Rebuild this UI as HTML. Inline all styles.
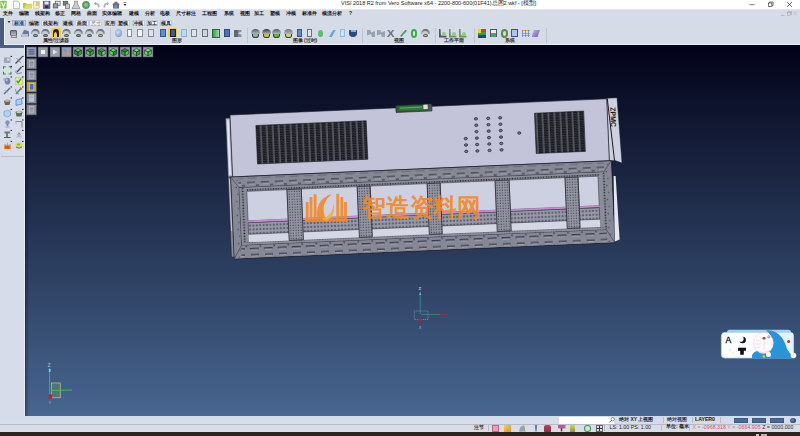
<!DOCTYPE html>
<html><head><meta charset="utf-8">
<style>
*{margin:0;padding:0;box-sizing:border-box}
html,body{width:800px;height:436px;overflow:hidden}
body{position:relative;background:#d6dbe8;font-family:"Liberation Sans",sans-serif;color:#222}
.a{position:absolute}
.t{position:absolute;white-space:nowrap;line-height:1;font-weight:bold}
svg{position:absolute}
</style></head><body>
<div class="a" style="left:25px;top:45px;width:775px;height:371px;background:linear-gradient(#020218,#48668f)"></div>
<div class="a" style="left:0px;top:0px;width:800px;height:9px;background:#fff"></div>
<div class="a" style="left:0px;top:9px;width:800px;height:1px;background:#e4e6ec"></div>
<svg class="a" style="left:0;top:0" width="130" height="10"><rect x="0.3" y="0.8" width="6.4" height="7.6" rx="0.8" fill="#86c455"/><path d="M1.6,2.2 L3.5,7 L5.4,2.2" stroke="#f4fff0" stroke-width="1.1" fill="none"/><path d="M13.4,1 h4.3 l1.8,1.8 v5.8 h-6.1 Z" fill="#f6f8fc" stroke="#8a94a8" stroke-width="0.6"/><path d="M23,3 h3 l1,1 h5 v4.5 h-9 Z" fill="#b8c838"/><path d="M24,8.5 L26,4.5 h7 l-2,4 Z" fill="#e0e060"/><rect x="33.5" y="1.3" width="6" height="7" fill="#f4ecc0" stroke="#c8b060" stroke-width="0.5"/><rect x="36" y="2.5" width="3" height="1" fill="#c0a850"/><rect x="36" y="4.5" width="3" height="1" fill="#c0a850"/><rect x="43.2" y="1.2" width="6.8" height="7.2" fill="#6a6aa0" stroke="#40406a" stroke-width="0.6"/><rect x="44.6" y="1.6" width="4" height="2.8" fill="#e8e8f4"/><rect x="45" y="5.6" width="3.4" height="2.6" fill="#30304a"/><rect x="55.5" y="1.2" width="4.6" height="4.2" fill="#e8eaee" stroke="#50545c" stroke-width="0.7"/><rect x="53.2" y="3.8" width="4.6" height="4.2" fill="#9aa0a8" stroke="#40444c" stroke-width="0.7"/><rect x="63.2" y="1.2" width="4.6" height="4" fill="#7a8088" stroke="#40444c" stroke-width="0.6"/><rect x="65.5" y="4" width="4" height="4.5" fill="#c8ccd4" stroke="#50545c" stroke-width="0.6"/><path d="M74.5,1.2 h3 v2.5 l2.5,4.8 h-8 l2.5,-4.8 Z" fill="#c8ccd0" stroke="#70767e" stroke-width="0.6"/><circle cx="86" cy="5" r="3.9" fill="#5a9a68"/><circle cx="86" cy="5" r="2" fill="#8ac090"/><path d="M99.5,7.5 Q99.8,2.5 96,3 L96,1.4 L93.8,3.6 L96,5.6 L96,4.3 Q98,4.3 97.8,7.5 Z" fill="#a8acb4"/><path d="M103.5,7.5 Q103.2,2.5 107,3 L107,1.4 L109.2,3.6 L107,5.6 L107,4.3 Q105,4.3 105.2,7.5 Z" fill="#a8acb4"/><path d="M112,4.5 L116,1.2 L120,4.5 L119,4.5 L119,8.5 L113,8.5 L113,4.5 Z" fill="#6a7080"/><rect x="114.5" y="5.5" width="2.5" height="3" fill="#6a9ad0"/><rect x="123.5" y="2.2" width="3" height="0.6" fill="#333"/><path d="M123.5,4 h3 l-1.5,2 Z" fill="#222"/></svg>
<span class="t" style="left:341px;top:1.2px;font-size:5.53px;color:#222;font-weight:normal">VISI 2018 R2 from Vero Software x64 - 2200-800-600(01F41)总图2.wkf - [模型]</span>
<svg class="a" style="left:740px;top:0" width="60" height="9"><line x1="9.5" y1="4.6" x2="14.5" y2="4.6" stroke="#222" stroke-width="0.6"/><rect x="28.3" y="3" width="3.6" height="3.6" fill="none" stroke="#222" stroke-width="0.6"/><path d="M29.5,3 v-1 h3.6 v3.6 h-1.2" fill="none" stroke="#222" stroke-width="0.6"/><path d="M47.2,2.2 L51.8,6.8 M51.8,2.2 L47.2,6.8" stroke="#222" stroke-width="0.7"/></svg>
<span class="t" style="left:3px;top:11.2px;font-size:5px;color:#111;">文件</span>
<span class="t" style="left:19px;top:11.2px;font-size:5px;color:#111;">编辑</span>
<span class="t" style="left:35px;top:11.2px;font-size:5px;color:#111;">线架构</span>
<span class="t" style="left:55px;top:11.2px;font-size:5px;color:#111;">修正</span>
<span class="t" style="left:71px;top:11.2px;font-size:5px;color:#111;">网格</span>
<span class="t" style="left:87px;top:11.2px;font-size:5px;color:#111;">曲面</span>
<span class="t" style="left:102px;top:11.2px;font-size:5px;color:#111;">实体编辑</span>
<span class="t" style="left:129px;top:11.2px;font-size:5px;color:#111;">建模</span>
<span class="t" style="left:145px;top:11.2px;font-size:5px;color:#111;">分析</span>
<span class="t" style="left:160px;top:11.2px;font-size:5px;color:#111;">电极</span>
<span class="t" style="left:176px;top:11.2px;font-size:5px;color:#111;">尺寸标注</span>
<span class="t" style="left:202px;top:11.2px;font-size:5px;color:#111;">工程图</span>
<span class="t" style="left:224px;top:11.2px;font-size:5px;color:#111;">系统</span>
<span class="t" style="left:240px;top:11.2px;font-size:5px;color:#111;">视图</span>
<span class="t" style="left:254px;top:11.2px;font-size:5px;color:#111;">加工</span>
<span class="t" style="left:270px;top:11.2px;font-size:5px;color:#111;">塑模</span>
<span class="t" style="left:286px;top:11.2px;font-size:5px;color:#111;">冲模</span>
<span class="t" style="left:302px;top:11.2px;font-size:5px;color:#111;">标准件</span>
<span class="t" style="left:322px;top:11.2px;font-size:5px;color:#111;">模流分析</span>
<span class="t" style="left:349px;top:11.2px;font-size:5px;color:#111;">?</span>
<svg class="a" style="left:776px;top:9px" width="24" height="9"><line x1="5" y1="6.3" x2="8.5" y2="6.3" stroke="#999" stroke-width="0.6"/><rect x="11.5" y="3.3" width="3" height="3" fill="none" stroke="#999" stroke-width="0.5"/><path d="M12.4,3.3 v-0.9 h3 v3 h-0.9" fill="none" stroke="#999" stroke-width="0.5"/><path d="M17.6,2.6 L20.8,5.8 M20.8,2.6 L17.6,5.8" stroke="#aaa" stroke-width="0.5"/></svg>
<div class="a" style="left:0px;top:17.5px;width:3.5px;height:28px;background:#4a5a80"></div>
<div class="a" style="left:3.5px;top:17.5px;width:796.5px;height:27px;background:#d6dbe8"></div>
<div class="a" style="left:3.5px;top:18px;width:0.7px;height:26.5px;background:#eaf0f8"></div>
<div class="a" style="left:3.5px;top:44px;width:796.5px;height:1px;background:#eaf0f8"></div>
<span class="t" style="left:7.6px;top:19.6px;font-size:4.2px;color:#111;">▾</span>
<div class="a" style="left:12.4px;top:19.6px;width:13.6px;height:6.8px;background:#c9d6ea;border:0.6px solid #9fb2d0"></div>
<span class="t" style="left:12.4px;top:20.5px;width:13.6px;text-align:center;font-size:5px;color:#26456e">标准</span>
<div class="a" style="left:27.5px;top:19.6px;width:12.5px;height:6.8px;background:#f6f7fb;border:0.6px solid #c8ccd8"></div>
<span class="t" style="left:27.5px;top:20.5px;width:12.5px;text-align:center;font-size:5px;color:#222">编辑</span>
<div class="a" style="left:41px;top:19.6px;width:18px;height:6.8px;background:#f6f7fb;border:0.6px solid #c8ccd8"></div>
<span class="t" style="left:41px;top:20.5px;width:18px;text-align:center;font-size:5px;color:#222">线架构</span>
<div class="a" style="left:61.5px;top:19.6px;width:12.7px;height:6.8px;background:#f6f7fb;border:0.6px solid #c8ccd8"></div>
<span class="t" style="left:61.5px;top:20.5px;width:12.7px;text-align:center;font-size:5px;color:#222">建模</span>
<div class="a" style="left:75px;top:19.6px;width:13.5px;height:6.8px;background:#f6f7fb;border:0.6px solid #c8ccd8"></div>
<span class="t" style="left:75px;top:20.5px;width:13.5px;text-align:center;font-size:5px;color:#222">曲面</span>
<div class="a" style="left:89px;top:19.6px;width:13px;height:6.8px;background:#f6f7fb;border:0.6px solid #c8ccd8"></div>
<span class="t" style="left:89px;top:20.5px;width:13px;text-align:center;font-size:5px;color:#999">尺寸</span>
<div class="a" style="left:103.5px;top:19.6px;width:12px;height:6.8px;background:#f6f7fb;border:0.6px solid #c8ccd8"></div>
<span class="t" style="left:103.5px;top:20.5px;width:12px;text-align:center;font-size:5px;color:#222">应用</span>
<div class="a" style="left:117px;top:19.6px;width:12.7px;height:6.8px;background:#f6f7fb;border:0.6px solid #c8ccd8"></div>
<span class="t" style="left:117px;top:20.5px;width:12.7px;text-align:center;font-size:5px;color:#222">塑模</span>
<div class="a" style="left:132px;top:19.6px;width:12.7px;height:6.8px;background:#f6f7fb;border:0.6px solid #c8ccd8"></div>
<span class="t" style="left:132px;top:20.5px;width:12.7px;text-align:center;font-size:5px;color:#222">冲模</span>
<div class="a" style="left:146px;top:19.6px;width:12px;height:6.8px;background:#f6f7fb;border:0.6px solid #c8ccd8"></div>
<span class="t" style="left:146px;top:20.5px;width:12px;text-align:center;font-size:5px;color:#222">加工</span>
<div class="a" style="left:159.7px;top:19.6px;width:12px;height:6.8px;background:#f6f7fb;border:0.6px solid #c8ccd8"></div>
<span class="t" style="left:159.7px;top:20.5px;width:12px;text-align:center;font-size:5px;color:#222">模具</span>
<span class="t" style="left:42.6px;top:38.2px;font-size:5px;color:#333;">属性/过滤器</span>
<span class="t" style="left:172px;top:38.2px;font-size:5px;color:#333;">图形</span>
<span class="t" style="left:292.5px;top:38.2px;font-size:5px;color:#333;">图像 (过时)</span>
<span class="t" style="left:394px;top:38.2px;font-size:5px;color:#333;">视图</span>
<span class="t" style="left:444px;top:38.2px;font-size:5px;color:#333;">工作平面</span>
<span class="t" style="left:505px;top:38.2px;font-size:5px;color:#333;">系统</span>
<div class="a" style="left:110px;top:28px;width:0.7px;height:15px;background:#bfc4d2"></div>
<div class="a" style="left:247px;top:28px;width:0.7px;height:15px;background:#bfc4d2"></div>
<div class="a" style="left:362px;top:28px;width:0.7px;height:15px;background:#bfc4d2"></div>
<div class="a" style="left:435px;top:28px;width:0.7px;height:15px;background:#bfc4d2"></div>
<div class="a" style="left:474px;top:28px;width:0.7px;height:15px;background:#bfc4d2"></div>
<div class="a" style="left:546px;top:28px;width:0.7px;height:15px;background:#bfc4d2"></div>
<div class="a" style="left:10px;top:29.5px;width:7px;height:6px;background:linear-gradient(#7a7e88,#b8bcc4);border-radius:1px;border:0.6px solid #5a5e68"></div>
<div class="a" style="left:11px;top:35.0px;width:5.5px;height:2.5px;background:#d8d0a0;border:0.5px solid #888"></div>
<div class="a" style="left:21px;top:29.5px;width:8px;height:7px;background:#6a7a98;clip-path:polygon(0 100%,40% 0,100% 30%,100% 100%)"></div>
<div class="a" style="left:22px;top:33.5px;width:6px;height:3px;background:#b8c0d0"></div>
<div class="a" style="left:31px;top:29.1px;width:8.5px;height:5px;background:linear-gradient(#60646e,#a4a8b2);border-radius:50% 50% 0 0/100% 100% 0 0"></div>
<div class="a" style="left:32.2px;top:30.5px;width:6.1px;height:3px;background:#c8ccd4;border-radius:50% 50% 0 0/100% 100% 0 0"></div>
<div class="a" style="left:32.5px;top:33.8px;width:5.5px;height:3.6px;background:#7ab870;border-radius:50%;border:0.5px solid #555"></div>
<div class="a" style="left:41px;top:29.1px;width:8.5px;height:5px;background:linear-gradient(#60646e,#a4a8b2);border-radius:50% 50% 0 0/100% 100% 0 0"></div>
<div class="a" style="left:42.2px;top:30.5px;width:6.1px;height:3px;background:#c8ccd4;border-radius:50% 50% 0 0/100% 100% 0 0"></div>
<div class="a" style="left:42.5px;top:33.8px;width:5.5px;height:3.6px;background:#6a90c0;border-radius:50%;border:0.5px solid #555"></div>
<div class="a" style="left:51px;top:28.0px;width:9.5px;height:10px;background:#f2d24a;border-radius:1px"></div>
<div class="a" style="left:52.5px;top:29.0px;width:6.5px;height:8px;background:#222;border-radius:50% 50% 0 0"></div>
<div class="a" style="left:54.2px;top:31.5px;width:3px;height:5.5px;background:#f2d24a;border-radius:50% 50% 0 0"></div>
<div class="a" style="left:62px;top:29.1px;width:8.5px;height:5px;background:linear-gradient(#60646e,#a4a8b2);border-radius:50% 50% 0 0/100% 100% 0 0"></div>
<div class="a" style="left:63.2px;top:30.5px;width:6.1px;height:3px;background:#c8ccd4;border-radius:50% 50% 0 0/100% 100% 0 0"></div>
<div class="a" style="left:63.5px;top:33.8px;width:5.5px;height:3.6px;background:#8ab050;border-radius:50%;border:0.5px solid #555"></div>
<div class="a" style="left:74px;top:29.1px;width:8.5px;height:5px;background:linear-gradient(#60646e,#a4a8b2);border-radius:50% 50% 0 0/100% 100% 0 0"></div>
<div class="a" style="left:75.2px;top:30.5px;width:6.1px;height:3px;background:#c8ccd4;border-radius:50% 50% 0 0/100% 100% 0 0"></div>
<div class="a" style="left:75.5px;top:33.8px;width:5.5px;height:3.6px;background:#60b060;border-radius:50%;border:0.5px solid #555"></div>
<div class="a" style="left:85px;top:29.1px;width:8.5px;height:5px;background:linear-gradient(#60646e,#a4a8b2);border-radius:50% 50% 0 0/100% 100% 0 0"></div>
<div class="a" style="left:86.2px;top:30.5px;width:6.1px;height:3px;background:#c8ccd4;border-radius:50% 50% 0 0/100% 100% 0 0"></div>
<div class="a" style="left:86.5px;top:33.8px;width:5.5px;height:3.6px;background:#70b858;border-radius:50%;border:0.5px solid #555"></div>
<div class="a" style="left:96px;top:29.1px;width:8.5px;height:5px;background:linear-gradient(#60646e,#a4a8b2);border-radius:50% 50% 0 0/100% 100% 0 0"></div>
<div class="a" style="left:97.2px;top:30.5px;width:6.1px;height:3px;background:#c8ccd4;border-radius:50% 50% 0 0/100% 100% 0 0"></div>
<div class="a" style="left:97.5px;top:33.8px;width:5.5px;height:3.6px;background:#d8d050;border-radius:50%;border:0.5px solid #555"></div>
<div class="a" style="left:114.5px;top:29.0px;width:7.5px;height:8px;background:radial-gradient(circle at 40% 40%,#cfe0f4,#5a8ac8);border-radius:50%"></div>
<div class="a" style="left:126.8px;top:29.2px;width:5.4px;height:7.6px;background:#f4f5f8;border:0.6px solid #8a8e98"></div>
<div class="a" style="left:137.3px;top:29.2px;width:5.9px;height:7.6px;background:#f4f5f8;border:0.6px solid #8a8e98"></div>
<div class="a" style="left:147.8px;top:29.2px;width:5.9px;height:7.6px;background:#dfe2e8;border:0.6px solid #8a8e98"></div>
<div class="a" style="left:159.8px;top:29.2px;width:5.9px;height:7.6px;background:#5a90d0;border:0.6px solid #305a90"></div>
<div class="a" style="left:168.3px;top:28.2px;width:8.9px;height:9.3px;background:#f0d040"></div>
<div class="a" style="left:169.8px;top:29.2px;width:5.9px;height:7.6px;background:#3a5a90;border:0.6px solid #222"></div>
<div class="a" style="left:180.8px;top:29.2px;width:5.9px;height:7.6px;background:#bcd8f0;border:0.6px solid #8ab0d8"></div>
<div class="a" style="left:191.3px;top:29.2px;width:5.4px;height:7.6px;background:#e0e2e8;border:0.6px solid #80848e"></div>
<div class="a" style="left:202.3px;top:29.2px;width:5.9px;height:7.6px;background:#d0d4dc;border:0.6px solid #6a6e78"></div>
<div class="a" style="left:212px;top:29.0px;width:8px;height:8.5px;background:linear-gradient(90deg,#3a9a50,#a8d8a0);border:0.6px solid #2a6a3a"></div>
<div class="a" style="left:224.3px;top:29.2px;width:5.9px;height:7.6px;background:#4a72b8;border:0.6px solid #2a4a80"></div>
<div class="a" style="left:234px;top:29.5px;width:7.5px;height:7.5px;background:linear-gradient(90deg,#606670 45%,#8a9098 45%);clip-path:polygon(0 0,100% 0,100% 30%,50% 50%,100% 70%,100% 100%,0 100%)"></div>
<div class="a" style="left:251.5px;top:32.0px;width:7.5px;height:5.5px;background:#80b8a0;border-radius:30% 30% 50% 50%;border:0.5px solid #3a3e48"></div>
<div class="a" style="left:251px;top:29.1px;width:8.5px;height:4.6px;background:linear-gradient(#5a5e68,#b0b4bc);border-radius:50% 50% 0 0/100% 100% 0 0"></div>
<div class="a" style="left:262.5px;top:32.0px;width:7.5px;height:5.5px;background:#c8c040;border-radius:30% 30% 50% 50%;border:0.5px solid #3a3e48"></div>
<div class="a" style="left:262px;top:29.1px;width:8.5px;height:4.6px;background:linear-gradient(#30343c,#b0b4bc);border-radius:50% 50% 0 0/100% 100% 0 0"></div>
<div class="a" style="left:272.5px;top:32.0px;width:7.5px;height:5.5px;background:#60b848;border-radius:30% 30% 50% 50%;border:0.5px solid #3a3e48"></div>
<div class="a" style="left:272px;top:29.1px;width:8.5px;height:4.6px;background:linear-gradient(#5a5e68,#b0b4bc);border-radius:50% 50% 0 0/100% 100% 0 0"></div>
<div class="a" style="left:284.5px;top:32.0px;width:7.5px;height:5.5px;background:#c8d878;border-radius:30% 30% 50% 50%;border:0.5px solid #3a3e48"></div>
<div class="a" style="left:284px;top:29.1px;width:8.5px;height:4.6px;background:linear-gradient(#70747e,#b0b4bc);border-radius:50% 50% 0 0/100% 100% 0 0"></div>
<div class="a" style="left:296.8px;top:29.2px;width:5.4px;height:7.6px;background:#6088c8;border:0.6px solid #3a5a90"></div>
<div class="a" style="left:306.8px;top:29.2px;width:5.4px;height:7.6px;background:#e0e4ea;border:0.6px solid #6a7080"></div>
<div class="a" style="left:318px;top:30.0px;width:5px;height:7px;background:#5ac070;border-radius:50% 50% 50% 50%/60% 60% 40% 40%"></div>
<div class="a" style="left:329px;top:29.5px;width:7px;height:7.5px;background:linear-gradient(135deg,#e8c050 30%,#60a8e0 30%);clip-path:polygon(60% 0,100% 0,40% 100%,0 100%)"></div>
<div class="a" style="left:340.3px;top:29.2px;width:4.9px;height:7.6px;background:#cfe2f4;border:0.6px solid #9ab8d8"></div>
<div class="a" style="left:349px;top:29.5px;width:8px;height:7.5px;background:#2a4a80;border-radius:10% 10% 50% 50%"></div>
<div class="a" style="left:350.5px;top:30.1px;width:5px;height:2px;background:#8ab0e0"></div>
<div class="a" style="left:367px;top:29.5px;width:8px;height:7.5px;background:#9aa2b0;clip-path:polygon(0 0,40% 0,50% 40%,100% 20%,100% 100%,60% 100%,50% 60%,0 80%)"></div>
<div class="a" style="left:377px;top:29.5px;width:8px;height:7.5px;background:#9aa2b0;clip-path:polygon(0 0,40% 0,50% 40%,100% 20%,100% 100%,60% 100%,50% 60%,0 80%)"></div>
<div class="a" style="left:387px;top:29.5px;width:7.5px;height:7.5px;background:#707888;clip-path:polygon(0 0,25% 0,50% 35%,75% 0,100% 0,65% 50%,100% 100%,75% 100%,50% 65%,25% 100%,0 100%,35% 50%)"></div>
<div class="a" style="left:400px;top:29.5px;width:7px;height:7.5px;background:#50a060;clip-path:polygon(80% 0,100% 15%,20% 100%,0 85%)"></div>
<div class="a" style="left:410.5px;top:29.0px;width:6.5px;height:8.5px;background:#40a850;border-radius:50%"></div>
<div class="a" style="left:412.5px;top:31.0px;width:2.5px;height:4.5px;background:#d8f0d8;border-radius:50%"></div>
<div class="a" style="left:421px;top:29.1px;width:8.5px;height:5px;background:linear-gradient(#60646e,#a4a8b2);border-radius:50% 50% 0 0/100% 100% 0 0"></div>
<div class="a" style="left:422.2px;top:30.5px;width:6.1px;height:3px;background:#c8ccd4;border-radius:50% 50% 0 0/100% 100% 0 0"></div>
<div class="a" style="left:422.5px;top:33.8px;width:5.5px;height:3.6px;background:#e8c860;border-radius:50%;border:0.5px solid #555"></div>
<div class="a" style="left:439px;top:29.0px;width:7.5px;height:8.5px;background:#505868;clip-path:polygon(0 0,20% 0,25% 75%,100% 80%,100% 100%,0 100%)"></div>
<div class="a" style="left:442px;top:31.5px;width:4px;height:4px;background:#8ac070;border-radius:50%;opacity:.8"></div>
<div class="a" style="left:449px;top:29.0px;width:7.5px;height:8.5px;background:#60a050;clip-path:polygon(0 0,20% 0,25% 75%,100% 80%,100% 100%,0 100%)"></div>
<div class="a" style="left:452px;top:31.5px;width:4px;height:4px;background:#8ac070;border-radius:50%;opacity:.8"></div>
<div class="a" style="left:459px;top:29.0px;width:7.5px;height:8.5px;background:#60a050;clip-path:polygon(0 0,20% 0,25% 75%,100% 80%,100% 100%,0 100%)"></div>
<div class="a" style="left:462px;top:31.5px;width:4px;height:4px;background:#8ac070;border-radius:50%;opacity:.8"></div>
<div class="a" style="left:477.5px;top:29.0px;width:8px;height:8.5px;background:linear-gradient(#e03030 0 33%,#30a040 33% 66%,#2040a0 66%)"></div>
<div class="a" style="left:477.5px;top:29.0px;width:3px;height:4px;background:#f0d030"></div>
<div class="a" style="left:489.8px;top:29.2px;width:6.9px;height:7.6px;background:#e8eef0;border:0.6px solid #505868"></div>
<div class="a" style="left:491px;top:32.5px;width:5px;height:4px;background:#50a060"></div>
<div class="a" style="left:500.5px;top:29.0px;width:7.5px;height:8.5px;background:#5a8a50;border-radius:50%"></div>
<div class="a" style="left:502.5px;top:31.0px;width:3.5px;height:4.5px;background:#d0e0c0;border-radius:50%"></div>
<div class="a" style="left:510.8px;top:29.2px;width:7.4px;height:7.6px;background:#a8c8e8;border:0.6px solid #2a5a90"></div>
<div class="a" style="left:521.5px;top:29.5px;width:8px;height:7.5px;background:repeating-linear-gradient(#d0b020 0 1.2px,transparent 1.2px 2.6px)"></div>
<div class="a" style="left:521.5px;top:29.5px;width:8px;height:7.5px;background:repeating-linear-gradient(90deg,#6080c0 0 1px,transparent 1px 3px);opacity:.7"></div>
<div class="a" style="left:531.5px;top:30.0px;width:8.5px;height:7px;background:linear-gradient(135deg,#c0b0e0,#7060a0);clip-path:polygon(30% 0,100% 0,70% 100%,0 100%)"></div>
<div class="a" style="left:0px;top:45px;width:25px;height:371px;background:#d6dce9"></div>
<div class="a" style="left:0px;top:45px;width:25px;height:3.3px;background:#4e5e8a"></div>
<div class="a" style="left:24px;top:45px;width:1px;height:371px;background:#e6eaf4"></div>
<div class="a" style="left:25px;top:45px;width:4px;height:371px;background:linear-gradient(90deg,rgba(0,0,20,.35),rgba(0,0,20,0))"></div>
<div class="a" style="left:1px;top:156px;width:23px;height:0.7px;background:#b8bdca"></div>
<svg class="a" style="left:0;top:0" width="25" height="160"><rect x="4.0" y="57.5" width="6.5" height="5.5" fill="#a0a6b4"/><rect x="7.0" y="58.5" width="2.5" height="2" fill="#d8dce6"/><path d="M15.5,63.5 L22,57.0" stroke="#50545e" stroke-width="1.5"/><path d="M16.5,58.0 L21,63.0" stroke="#80848e" stroke-width="0.9"/><rect x="10.6" y="55.9" width="1.3" height="1.1" fill="#1a1a1a"/><rect x="22.2" y="55.9" width="1.3" height="1.1" fill="#1a1a1a"/><rect x="4.5" y="67.5" width="5.5" height="5.5" fill="#cfe8d0"/><path d="M3.5,68.7 v-2 h2.2 M8.8,66.7 h2.2 v2 M11.0,71.8 v2.2 h-2.2 M5.7,74.0 h-2.2 v-2.2" stroke="#4a7a58" stroke-width="1.1" fill="none"/><path d="M21.5,67.0 L17,72.0" stroke="#44485a" stroke-width="1.3"/><path d="M16,70.5 Q15,74.0 19,73.5 L22,72.5" stroke="#7080b0" stroke-width="0.9" fill="none"/><rect x="10.6" y="65.9" width="1.3" height="1.1" fill="#1a1a1a"/><rect x="22.2" y="65.9" width="1.3" height="1.1" fill="#1a1a1a"/><ellipse cx="7.5" cy="81.2" rx="2.8" ry="3.4" fill="#7684b4"/><ellipse cx="6.7" cy="80" rx="1" ry="1.2" fill="#b8c4e4"/><rect x="3.5" y="78" width="1.2" height="3" fill="#9aa8c8"/><rect x="15.3" y="77.3" width="7" height="7" fill="#d8ec90" stroke="#c8c060" stroke-width="0.6"/><path d="M16.6,80.8 L18.2,82.6 L21,78.6" stroke="#3a9a3a" stroke-width="1.3" fill="none"/><rect x="10.6" y="76.4" width="1.3" height="1.1" fill="#1a1a1a"/><rect x="22.2" y="76.4" width="1.3" height="1.1" fill="#1a1a1a"/><path d="M4.0,94 L10.0,88" stroke="#5a6a98" stroke-width="1.4"/><path d="M4.5,90 L7.5,93" stroke="#8ab0e0" stroke-width="1"/><circle cx="9.5" cy="88.5" r="0.8" fill="#40a040"/><path d="M16,94 L21.5,88" stroke="#5a78c0" stroke-width="1.5"/><path d="M20,87.5 L22,89.5" stroke="#d06060" stroke-width="1.1"/><path d="M15.5,89 Q16,94 19,94" stroke="#4a9a60" stroke-width="0.8" fill="none"/><rect x="10.6" y="86.4" width="1.3" height="1.1" fill="#1a1a1a"/><rect x="22.2" y="86.4" width="1.3" height="1.1" fill="#1a1a1a"/><path d="M4.0,101 Q7.5,98.5 10.5,101 L9.5,105 L5.0,105 Z" fill="#6e625a"/><ellipse cx="7.3" cy="100.8" rx="2.6" ry="1.2" fill="#b8b0a8"/><path d="M16,100 L21.5,98.5 L22,104 L16,105.5 Z" fill="#a8d2f4" stroke="#4a7ab0" stroke-width="0.7"/><rect x="10.6" y="97.4" width="1.3" height="1.1" fill="#1a1a1a"/><rect x="22.2" y="97.4" width="1.3" height="1.1" fill="#1a1a1a"/><path d="M4.0,111.5 L7.5,110.0 L10.5,111.5 L10.5,115.5 L7.5,117.0 L4.0,115.5 Z" fill="#b4d2f2" stroke="#6a90c0" stroke-width="0.6"/><path d="M15.5,112.0 Q19,109.5 22.5,112.0 L21.5,116.5 L16.5,116.5 Z" fill="#5c6a5c"/><ellipse cx="19" cy="112.1" rx="2.8" ry="1.1" fill="#c8d0c0"/><rect x="10.6" y="108.9" width="1.3" height="1.1" fill="#1a1a1a"/><rect x="22.2" y="108.9" width="1.3" height="1.1" fill="#1a1a1a"/><circle cx="7.5" cy="122.5" r="2.2" fill="#8098c0"/><path d="M6.7,124 h1.6 v3.5 h-1.6 Z" fill="#7088a8"/><ellipse cx="7.5" cy="127" rx="3" ry="0.8" fill="#b0c0d8"/><path d="M15.5,121.5 h6.5 v6" stroke="#7a8088" stroke-width="0.9" fill="none"/><path d="M16,121.5 v3" stroke="#a8b8a0" stroke-width="0.8"/><rect x="10.6" y="119.4" width="1.3" height="1.1" fill="#1a1a1a"/><rect x="22.2" y="119.4" width="1.3" height="1.1" fill="#1a1a1a"/><path d="M4.5,131.5 h5.5 v2 h-2 v4 h-2 v-4 h-1.5 Z" fill="#6a8070"/><rect x="4.0" y="137.0" width="6.5" height="1" fill="#506050"/><path d="M16,137.5 L19,132.5 L22,137.5 Z" fill="#b8bcc8"/><path d="M17.5,135.0 L19,132.5 L20.5,135.0" stroke="#70747e" stroke-width="0.6" fill="none"/><rect x="10.6" y="129.9" width="1.3" height="1.1" fill="#1a1a1a"/><rect x="22.2" y="129.9" width="1.3" height="1.1" fill="#1a1a1a"/><path d="M4.0,149.0 L4.5,143.5 L6.5,145.5 L7.5,142.0 L8.5,145.5 L10.5,143.5 L11.0,149.0 Z" fill="#e88a30"/><rect x="5.0" y="146.0" width="4.5" height="2.5" fill="#c05a20"/><ellipse cx="19" cy="145.5" rx="3.6" ry="3" fill="#d4e050"/><path d="M16,147.0 Q19,149.5 22,147.0" stroke="#50544a" stroke-width="0.8" fill="none"/><ellipse cx="18.5" cy="144.5" rx="1.5" ry="1" fill="#80b040"/><rect x="10.6" y="140.9" width="1.3" height="1.1" fill="#1a1a1a"/><rect x="22.2" y="140.9" width="1.3" height="1.1" fill="#1a1a1a"/></svg>
<svg class="a" style="left:0;top:0" width="160" height="120"><rect x="26.5" y="47" width="10" height="10" fill="#9a9ea8" stroke="#40444e" stroke-width="0.6"/><rect x="28.5" y="49.2" width="6" height="1.2" fill="#4a5a98"/><rect x="28.5" y="51.3" width="6" height="1.2" fill="#4a5a98"/><rect x="28.5" y="53.4" width="6" height="1.2" fill="#4a5a98"/><rect x="38" y="47" width="10" height="10" fill="#9a9ea8" stroke="#40444e" stroke-width="0.6"/><rect x="41" y="50" width="4" height="4" fill="#eef6ee"/><rect x="50" y="47" width="10" height="10" fill="#9a9ea8" stroke="#40444e" stroke-width="0.6"/><path d="M53,49.5 L57.5,52 L53,54.5 Z" fill="#dde2ea"/><rect x="61.5" y="47" width="10" height="10" fill="#9a9ea8" stroke="#40444e" stroke-width="0.6"/><path d="M63.5,49 L69.5,55" stroke="#6a98d8" stroke-width="2"/><path d="M66.5,52 L69.5,55" stroke="#d89a60" stroke-width="2"/><rect x="73" y="47" width="10" height="10" fill="#9a9ea8" stroke="#40444e" stroke-width="0.6"/><path d="M78,48.4 L81.4,50.2 L78,52 L74.6,50.2 Z" fill="#50d050"/><path d="M74.6,50.2 L78,52 L78,55.8 L74.6,54 Z" fill="#2a8a30"/><path d="M81.4,50.2 L78,52 L78,55.8 L81.4,54 Z" fill="#3aa040"/><path d="M78,48.4 L81.4,50.2 L78,52 L74.6,50.2 Z M74.6,50.2 L78,52 L78,55.8 L74.6,54 Z M81.4,50.2 L78,52 L78,55.8 L81.4,54 Z" fill="none" stroke="#1e2a22" stroke-width="0.55"/><rect x="85" y="47" width="10" height="10" fill="#9a9ea8" stroke="#40444e" stroke-width="0.6"/><path d="M90,48.4 L93.4,50.2 L90,52 L86.6,50.2 Z" fill="#2a8a30"/><path d="M86.6,50.2 L90,52 L90,55.8 L86.6,54 Z" fill="#50d050"/><path d="M93.4,50.2 L90,52 L90,55.8 L93.4,54 Z" fill="#3aa040"/><path d="M90,48.4 L93.4,50.2 L90,52 L86.6,50.2 Z M86.6,50.2 L90,52 L90,55.8 L86.6,54 Z M93.4,50.2 L90,52 L90,55.8 L93.4,54 Z" fill="none" stroke="#1e2a22" stroke-width="0.55"/><rect x="96.8" y="47" width="10" height="10" fill="#9a9ea8" stroke="#40444e" stroke-width="0.6"/><path d="M101.8,48.4 L105.2,50.2 L101.8,52 L98.39999999999999,50.2 Z" fill="#3aa040"/><path d="M98.39999999999999,50.2 L101.8,52 L101.8,55.8 L98.39999999999999,54 Z" fill="#2a8a30"/><path d="M105.2,50.2 L101.8,52 L101.8,55.8 L105.2,54 Z" fill="#60e060"/><path d="M101.8,48.4 L105.2,50.2 L101.8,52 L98.39999999999999,50.2 Z M98.39999999999999,50.2 L101.8,52 L101.8,55.8 L98.39999999999999,54 Z M105.2,50.2 L101.8,52 L101.8,55.8 L105.2,54 Z" fill="none" stroke="#1e2a22" stroke-width="0.55"/><rect x="108.3" y="47" width="10" height="10" fill="#9a9ea8" stroke="#40444e" stroke-width="0.6"/><path d="M113.3,48.4 L116.7,50.2 L113.3,52 L109.89999999999999,50.2 Z" fill="#60e060"/><path d="M109.89999999999999,50.2 L113.3,52 L113.3,55.8 L109.89999999999999,54 Z" fill="#60e060"/><path d="M116.7,50.2 L113.3,52 L113.3,55.8 L116.7,54 Z" fill="#2a8a30"/><path d="M113.3,48.4 L116.7,50.2 L113.3,52 L109.89999999999999,50.2 Z M109.89999999999999,50.2 L113.3,52 L113.3,55.8 L109.89999999999999,54 Z M116.7,50.2 L113.3,52 L113.3,55.8 L116.7,54 Z" fill="none" stroke="#1e2a22" stroke-width="0.55"/><rect x="120" y="47" width="10" height="10" fill="#9a9ea8" stroke="#40444e" stroke-width="0.6"/><path d="M125,48.4 L128.4,50.2 L125,52 L121.6,50.2 Z" fill="#2a8a30"/><path d="M121.6,50.2 L125,52 L125,55.8 L121.6,54 Z" fill="#3aa040"/><path d="M128.4,50.2 L125,52 L125,55.8 L128.4,54 Z" fill="#50d050"/><path d="M125,48.4 L128.4,50.2 L125,52 L121.6,50.2 Z M121.6,50.2 L125,52 L125,55.8 L121.6,54 Z M128.4,50.2 L125,52 L125,55.8 L128.4,54 Z" fill="none" stroke="#1e2a22" stroke-width="0.55"/><rect x="131.5" y="47" width="10" height="10" fill="#9a9ea8" stroke="#40444e" stroke-width="0.6"/><path d="M136.5,48.4 L139.9,50.2 L136.5,52 L133.1,50.2 Z" fill="#60e060"/><path d="M133.1,50.2 L136.5,52 L136.5,55.8 L133.1,54 Z" fill="#50d050"/><path d="M139.9,50.2 L136.5,52 L136.5,55.8 L139.9,54 Z" fill="#3aa040"/><path d="M136.5,48.4 L139.9,50.2 L136.5,52 L133.1,50.2 Z M133.1,50.2 L136.5,52 L136.5,55.8 L133.1,54 Z M139.9,50.2 L136.5,52 L136.5,55.8 L139.9,54 Z" fill="none" stroke="#1e2a22" stroke-width="0.55"/><rect x="143" y="47" width="10" height="10" fill="#9a9ea8" stroke="#40444e" stroke-width="0.6"/><path d="M148,48.4 L151.4,50.2 L148,52 L144.6,50.2 Z" fill="#70f070"/><path d="M144.6,50.2 L148,52 L148,55.8 L144.6,54 Z" fill="#60e060"/><path d="M151.4,50.2 L148,52 L148,55.8 L151.4,54 Z" fill="#50d050"/><path d="M148,48.4 L151.4,50.2 L148,52 L144.6,50.2 Z M144.6,50.2 L148,52 L148,55.8 L144.6,54 Z M151.4,50.2 L148,52 L148,55.8 L151.4,54 Z" fill="none" stroke="#1e2a22" stroke-width="0.55"/><rect x="26.5" y="58.5" width="10" height="10.5" fill="#8a8e98" stroke="#40444e" stroke-width="0.6"/><rect x="29.3" y="60.5" width="4.6" height="6.5" fill="#9a9eaa" stroke="#c0c4ce" stroke-width="0.6"/><line x1="29.8" y1="62.7" x2="33.4" y2="62.7" stroke="#5a5e68" stroke-width="0.4"/><rect x="26.5" y="70" width="10" height="10.5" fill="#8a8e98" stroke="#40444e" stroke-width="0.6"/><rect x="29.3" y="72" width="4.6" height="6.5" fill="#9a9eaa" stroke="#c0c4ce" stroke-width="0.6"/><line x1="29.8" y1="74.2" x2="33.4" y2="74.2" stroke="#5a5e68" stroke-width="0.4"/><rect x="26.5" y="81.5" width="10" height="10.5" fill="#b89c50" stroke="#40444e" stroke-width="0.6"/><rect x="29.3" y="83.5" width="4.6" height="6.5" fill="#5070b0" stroke="#d8dce8" stroke-width="0.6"/><rect x="26.5" y="93" width="10" height="10.5" fill="#8a8e98" stroke="#40444e" stroke-width="0.6"/><rect x="29.3" y="95" width="4.6" height="6.5" fill="#b8c4dc" stroke="#c0c4ce" stroke-width="0.6"/><line x1="29.8" y1="97.2" x2="33.4" y2="97.2" stroke="#5a5e68" stroke-width="0.4"/><rect x="26.5" y="104.5" width="10" height="10.5" fill="#8a8e98" stroke="#40444e" stroke-width="0.6"/><rect x="29.3" y="106.5" width="4.6" height="6.5" fill="#9a9eaa" stroke="#c0c4ce" stroke-width="0.6"/><line x1="29.8" y1="108.7" x2="33.4" y2="108.7" stroke="#5a5e68" stroke-width="0.4"/></svg>
<div class="a" style="left:0px;top:416px;width:800px;height:8px;background:linear-gradient(#d2dcee,#d8dce8)"></div>
<div class="a" style="left:0px;top:424px;width:800px;height:0.8px;background:#b8bac8"></div>
<div class="a" style="left:0px;top:424.8px;width:800px;height:7.6px;background:#d9dde7"></div>
<div class="a" style="left:0px;top:432.3px;width:800px;height:3.7px;background:#2a2520"></div>
<div class="a" style="left:756px;top:433.5px;width:3px;height:2.5px;background:#cfcac4"></div>
<div class="a" style="left:761px;top:433.5px;width:6px;height:2.5px;background:#bcb6b0"></div>
<div class="a" style="left:558.5px;top:416.5px;width:55.5px;height:7px;background:#fdfdfe"></div>
<svg class="a" style="left:608px;top:416px" width="8" height="8"><circle cx="4.6" cy="3.2" r="1.7" fill="none" stroke="#444" stroke-width="0.6"/><line x1="3.4" y1="4.4" x2="1.2" y2="6.6" stroke="#444" stroke-width="0.7"/></svg>
<span class="t" style="left:619px;top:417.2px;font-size:5px;color:#222;">绝对 XY 上视图</span>
<div class="a" style="left:663px;top:417px;width:0.6px;height:6px;background:#b8bcc8"></div>
<span class="t" style="left:666.5px;top:417.2px;font-size:5px;color:#333;">绝对视图</span>
<div class="a" style="left:692px;top:417px;width:0.6px;height:6px;background:#b8bcc8"></div>
<span class="t" style="left:695px;top:417.1px;font-size:5.2px;color:#111;font-weight:bold">LAYER0</span>
<div class="a" style="left:720px;top:417px;width:0.6px;height:6px;background:#b8bcc8"></div>
<div class="a" style="left:734px;top:418px;width:13.5px;height:5px;background:#4a6a96;border:0.5px solid #3a5a86"></div>
<div class="a" style="left:752px;top:418px;width:13.5px;height:5px;background:#4a6a96;border:0.5px solid #3a5a86"></div>
<div class="a" style="left:770px;top:418px;width:13.5px;height:5px;background:#4a6a96;border:0.5px solid #3a5a86"></div>
<div class="a" style="left:789.5px;top:417.5px;width:6px;height:5.5px;background:radial-gradient(circle at 40% 40%,#6a8ab0,#10204a);border-radius:50%"></div>
<span class="t" style="left:474px;top:425.2px;font-size:5px;color:#333;">注节</span>
<div class="a" style="left:488px;top:425px;width:0.6px;height:6px;background:#b8bcc8"></div>
<div class="a" style="left:492px;top:425px;width:7px;height:6.5px;background:#e8a0b8;border:0.8px solid #d06080"></div>
<div class="a" style="left:504px;top:425px;width:7px;height:6.5px;background:linear-gradient(135deg,#f0d060,#e09030)"></div>
<div class="a" style="left:519px;top:425px;width:6.5px;height:6.5px;background:#9aa0b0;clip-path:polygon(20% 30%,80% 0,100% 100%,0 100%)"></div>
<div class="a" style="left:533px;top:425px;width:6px;height:6.5px;background:#5a80b0;clip-path:polygon(30% 0,70% 0,60% 100%,40% 100%)"></div>
<div class="a" style="left:544px;top:425px;width:7px;height:6.5px;background:linear-gradient(#c04060,#803040);border-radius:30% 30% 10% 10%"></div>
<div class="a" style="left:557.5px;top:425px;width:8px;height:6.5px;background:linear-gradient(#d050a0 50%,#7a3050 50%);clip-path:polygon(0 0,100% 0,100% 50%,60% 50%,60% 100%,40% 100%,40% 50%,0 50%)"></div>
<div class="a" style="left:570px;top:425px;width:4.5px;height:6.5px;background:linear-gradient(#e0d040,#70a050)"></div>
<div class="a" style="left:583.5px;top:425px;width:7px;height:6.5px;border:1.3px solid #30a040;border-radius:50%;background:transparent"></div>
<div class="a" style="left:596px;top:425px;width:6.5px;height:6.5px;background:linear-gradient(90deg,transparent 45%,#333 45% 55%,transparent 55%),linear-gradient(transparent 45%,#333 45% 55%,transparent 55%);border:0.6px solid #666"></div>
<div class="a" style="left:604px;top:425px;width:0.6px;height:6px;background:#b8bcc8"></div>
<span class="t" style="left:609.5px;top:425.1px;font-size:5.3px;color:#222;font-weight:normal">LS: 1.00 PS: 1.00</span>
<div class="a" style="left:661px;top:425px;width:0.6px;height:6px;background:#b8bcc8"></div>
<span class="t" style="left:666px;top:425.1px;font-size:4.6px;color:#222;">单位: 毫米</span>
<div class="a" style="left:689px;top:425px;width:0.6px;height:6px;background:#b8bcc8"></div>
<span class="t" style="left:692.5px;top:425.1px;font-size:5.3px;color:#333;white-space:pre;font-weight:normal"><span style="color:#d87890">X = </span><span style="color:#e05070">-0968.318</span><span style="color:#d87890"> Y = </span><span style="color:#e05070">-0664.905</span><span style="color:#333"> Z = 0000.000</span></span>
<svg class="a" style="left:0;top:0" width="800" height="436" viewBox="0 0 800 436">
<defs>
<pattern id="grill" x="1" width="6" height="2.4" patternUnits="userSpaceOnUse">
 <rect width="6" height="2.4" fill="#18181e"/>
 <path d="M0.2,1.6 Q1.3,0.6 2.4,1.4 T4.6,1.2" stroke="#54545e" stroke-width="0.6" fill="none"/>
 <rect x="4.7" y="0" width="0.75" height="2.4" fill="#a8a8b4"/>
</pattern>
<pattern id="perf" width="2.6" height="2.6" patternUnits="userSpaceOnUse">
 <rect width="2.6" height="2.6" fill="#9496a4"/>
 <rect x="0.6" y="0.6" width="1.1" height="1.1" fill="#40404e"/>
</pattern>
<pattern id="band" width="14" height="9.5" patternUnits="userSpaceOnUse">
 <rect width="14" height="9.5" fill="#868896"/>
 <rect x="0" y="1.2" width="8" height="1.1" fill="#3a3c48"/>
 <rect x="2" y="3.2" width="6" height="0.9" fill="#a4a6b4"/>
 <rect x="9" y="4.2" width="3" height="1.2" fill="#40424c"/>
 <rect x="1" y="6.3" width="9" height="0.8" fill="#5a5c68"/>
</pattern>
<pattern id="band2" width="14" height="12.5" patternUnits="userSpaceOnUse">
 <rect width="14" height="12.5" fill="#868896"/>
 <rect x="1" y="2.5" width="8" height="1.1" fill="#33343e"/>
 <rect x="2" y="4" width="6" height="0.9" fill="#a6a8b6"/>
 <rect x="10" y="6" width="1.2" height="2" fill="#3a3c46"/>
 <rect x="0" y="8.8" width="9" height="1.2" fill="#2e2f38"/>
 <rect x="1" y="10.4" width="7" height="0.8" fill="#a8aab8"/>
</pattern>
<pattern id="vband" width="6.5" height="14" patternUnits="userSpaceOnUse">
 <rect width="6.5" height="14" fill="#868896"/>
 <rect x="2.5" y="2" width="1.1" height="1.3" fill="#3a3c48"/>
 <rect x="4" y="9" width="1" height="1.2" fill="#3a3c48"/>
</pattern>
<pattern id="hdots" width="2.6" height="3.7" patternUnits="userSpaceOnUse">
 <rect width="2.6" height="3.7" fill="#8a8c9a"/>
 <rect x="0.6" y="1" width="1.3" height="1.4" fill="#1e1e28"/>
</pattern>
<pattern id="vdots" width="7.2" height="2.8" patternUnits="userSpaceOnUse">
 <rect width="7.2" height="2.8" fill="#8a8c9a"/>
 <rect x="1.4" y="0.7" width="1.5" height="1.3" fill="#1e1e28"/>
</pattern>
<pattern id="dots" width="2.6" height="3" patternUnits="userSpaceOnUse">
 <rect width="2.6" height="3" fill="#8a8c9a"/>
 <rect x="0.6" y="0.9" width="1.2" height="1.2" fill="#262632"/>
</pattern>
<pattern id="rail" y="0.3" width="3.4" height="3.9" patternUnits="userSpaceOnUse">
 <rect width="3.4" height="3.9" fill="#969aa8"/>
 <rect x="0.6" y="0.9" width="2" height="2" fill="#6a6c7a"/>
 <rect x="1.2" y="1.5" width="0.9" height="0.9" fill="#3a3a46"/>
</pattern>
</defs>
<g transform="translate(230,115) rotate(-2.46)">
<rect x="-4.6" y="3" width="4.6" height="59" fill="#b8bacb" stroke="#20202c" stroke-width="0.6"/>
<rect x="-3.2" y="5" width="1.6" height="55" fill="#e8eaf4"/>
<rect x="-4.6" y="62" width="3.2" height="80" fill="#8a8c9a" stroke="#20202c" stroke-width="0.5"/>
<rect x="-3.8" y="64" width="1" height="52" fill="#d8dae6" opacity="0.8"/>
<polygon points="377,-0.6 387.4,-0.6 389.6,64.8 382.7,62 377,62" fill="#cfd0e0" stroke="#1a1a28" stroke-width="0.5"/>
<line x1="377.6" y1="-0.5" x2="382.2" y2="62" stroke="#181826" stroke-width="1"/>
<text x="0" y="0" transform="translate(380.2,8.5) rotate(90)" font-family="Liberation Sans" font-weight="bold" font-size="7.4" fill="#1a1a1a" textLength="20" lengthAdjust="spacingAndGlyphs">ZPMC</text>
<rect x="0" y="0" width="377" height="62" fill="#c3c4da" stroke="#1c1c2a" stroke-width="0.6"/>
<rect x="25.4" y="11.6" width="110.4" height="38.5" fill="url(#grill)" stroke="#1a1a22" stroke-width="0.6"/>
<rect x="304.3" y="11.3" width="49.2" height="40.3" fill="url(#grill)" stroke="#1a1a22" stroke-width="0.6"/>
<ellipse cx="234.5" cy="33.7" rx="1.6" ry="1.25" fill="#7a7c8e" stroke="#24242e" stroke-width="0.75"/>
<ellipse cx="234.5" cy="40.1" rx="1.6" ry="1.25" fill="#7a7c8e" stroke="#24242e" stroke-width="0.75"/>
<ellipse cx="234.5" cy="46.5" rx="1.6" ry="1.25" fill="#7a7c8e" stroke="#24242e" stroke-width="0.75"/>
<ellipse cx="245.6" cy="14.4" rx="1.6" ry="1.25" fill="#7a7c8e" stroke="#24242e" stroke-width="0.75"/>
<ellipse cx="245.6" cy="20.8" rx="1.6" ry="1.25" fill="#7a7c8e" stroke="#24242e" stroke-width="0.75"/>
<ellipse cx="245.6" cy="27.2" rx="1.6" ry="1.25" fill="#7a7c8e" stroke="#24242e" stroke-width="0.75"/>
<ellipse cx="245.6" cy="33.7" rx="1.6" ry="1.25" fill="#7a7c8e" stroke="#24242e" stroke-width="0.75"/>
<ellipse cx="245.6" cy="40.1" rx="1.6" ry="1.25" fill="#7a7c8e" stroke="#24242e" stroke-width="0.75"/>
<ellipse cx="245.6" cy="46.5" rx="1.6" ry="1.25" fill="#7a7c8e" stroke="#24242e" stroke-width="0.75"/>
<ellipse cx="257.8" cy="14.4" rx="1.6" ry="1.25" fill="#7a7c8e" stroke="#24242e" stroke-width="0.75"/>
<ellipse cx="257.8" cy="20.8" rx="1.6" ry="1.25" fill="#7a7c8e" stroke="#24242e" stroke-width="0.75"/>
<ellipse cx="257.8" cy="27.2" rx="1.6" ry="1.25" fill="#7a7c8e" stroke="#24242e" stroke-width="0.75"/>
<ellipse cx="257.8" cy="33.7" rx="1.6" ry="1.25" fill="#7a7c8e" stroke="#24242e" stroke-width="0.75"/>
<ellipse cx="257.8" cy="40.1" rx="1.6" ry="1.25" fill="#7a7c8e" stroke="#24242e" stroke-width="0.75"/>
<ellipse cx="257.8" cy="46.5" rx="1.6" ry="1.25" fill="#7a7c8e" stroke="#24242e" stroke-width="0.75"/>
<ellipse cx="269.8" cy="14.4" rx="1.6" ry="1.25" fill="#7a7c8e" stroke="#24242e" stroke-width="0.75"/>
<ellipse cx="269.8" cy="20.8" rx="1.6" ry="1.25" fill="#7a7c8e" stroke="#24242e" stroke-width="0.75"/>
<ellipse cx="269.8" cy="27.2" rx="1.6" ry="1.25" fill="#7a7c8e" stroke="#24242e" stroke-width="0.75"/>
<ellipse cx="269.8" cy="33.7" rx="1.6" ry="1.25" fill="#7a7c8e" stroke="#24242e" stroke-width="0.75"/>
<ellipse cx="269.8" cy="40.1" rx="1.6" ry="1.25" fill="#7a7c8e" stroke="#24242e" stroke-width="0.75"/>
<ellipse cx="269.8" cy="46.5" rx="1.6" ry="1.25" fill="#7a7c8e" stroke="#24242e" stroke-width="0.75"/>
<ellipse cx="288.2" cy="30.4" rx="1.6" ry="1.25" fill="#7a7c8e" stroke="#24242e" stroke-width="0.75"/>
<rect x="166" y="-2.4" width="36" height="7" fill="#2e5a34" stroke="#1a2a1e" stroke-width="0.6"/>
<rect x="169" y="-1" width="24" height="4" fill="#2a7a3a"/>
<rect x="170" y="-0.2" width="22" height="1.3" fill="#5aa060"/>
<rect x="193.5" y="-2" width="4.5" height="4.5" fill="#e0e2da"/>
<rect x="198" y="-2" width="3.5" height="6.5" fill="#50545a"/>
<rect x="-2" y="62" width="381" height="82" fill="#868896" stroke="#16161e" stroke-width="0.7"/>
<rect x="-1" y="63" width="379" height="9.5" fill="url(#band)"/>
<rect x="-1" y="131" width="379" height="12.5" fill="url(#band2)"/>
<rect x="-1" y="63" width="6.5" height="80" fill="url(#vband)"/>
<rect x="371.5" y="63" width="7" height="80" fill="url(#vband)"/>
<path d="M-2,62 L6,73 M379,62 L371,73 M-2,144 L6,130.5 M379,144 L371,130.5" stroke="#30303a" stroke-width="0.5"/>
<rect x="6" y="73" width="365" height="57.5" fill="#8a8c9a" stroke="#22222c" stroke-width="0.6"/>
<rect x="6.5" y="73.3" width="364" height="3.7" fill="url(#hdots)"/>
<rect x="6.5" y="127.8" width="364" height="2.7" fill="url(#hdots)"/>
<rect x="6.3" y="73.5" width="7.2" height="54.3" fill="url(#vdots)"/>
<rect x="365" y="73.5" width="6" height="54.3" fill="url(#vdots)" transform="translate(1.5,0)"/>
<rect x="13.5" y="77" width="40.2" height="29.5" fill="#cdd0e0" stroke="#2a2a36" stroke-width="0.5"/>
<rect x="13.5" y="120" width="40.2" height="7.8" fill="#d4d6e4"/>
<rect x="68" y="77" width="56.0" height="29.5" fill="#cdd0e0" stroke="#2a2a36" stroke-width="0.5"/>
<rect x="68" y="120" width="56.0" height="7.8" fill="#d4d6e4"/>
<rect x="137" y="77" width="57.0" height="29.5" fill="#cdd0e0" stroke="#2a2a36" stroke-width="0.5"/>
<rect x="137" y="120" width="57.0" height="7.8" fill="#d4d6e4"/>
<rect x="207" y="77" width="55.0" height="29.5" fill="#cdd0e0" stroke="#2a2a36" stroke-width="0.5"/>
<rect x="207" y="120" width="55.0" height="7.8" fill="#d4d6e4"/>
<rect x="276" y="77" width="56.0" height="29.5" fill="#cdd0e0" stroke="#2a2a36" stroke-width="0.5"/>
<rect x="276" y="120" width="56.0" height="7.8" fill="#d4d6e4"/>
<rect x="345" y="77" width="20.0" height="29.5" fill="#cdd0e0" stroke="#2a2a36" stroke-width="0.5"/>
<rect x="345" y="120" width="20.0" height="7.8" fill="#d4d6e4"/>
<rect x="13.5" y="108.3" width="351.5" height="11.7" fill="url(#rail)" stroke="#30303c" stroke-width="0.5"/>
<rect x="13.5" y="106.3" width="351.5" height="1.8" fill="#c68ad0"/><rect x="13.5" y="108.1" width="351.5" height="0.6" fill="#4a4a58"/>
<rect x="53.7" y="77" width="14.3" height="50.8" fill="url(#perf)" stroke="#1e1e2a" stroke-width="0.7"/>
<rect x="124" y="77" width="13.0" height="50.8" fill="url(#perf)" stroke="#1e1e2a" stroke-width="0.7"/>
<rect x="194" y="77" width="13.0" height="50.8" fill="url(#perf)" stroke="#1e1e2a" stroke-width="0.7"/>
<rect x="262" y="77" width="14.0" height="50.8" fill="url(#perf)" stroke="#1e1e2a" stroke-width="0.7"/>
<rect x="332" y="77" width="13.0" height="50.8" fill="url(#perf)" stroke="#1e1e2a" stroke-width="0.7"/>
</g>
<polygon points="613.6,176 615.6,176 619.6,239.5 614.8,241.6" fill="#e4e6f2"/>
<g fill="#f28a2a" opacity="0.92">
<rect x="305.8" y="202" width="2.8" height="17"/>
<rect x="309.6" y="197" width="2.8" height="22"/>
<rect x="313.7" y="194.3" width="2.8" height="24.69999999999999"/>
<rect x="336.3" y="193.8" width="2.8" height="25.19999999999999"/>
<rect x="340.4" y="197" width="2.8" height="22"/>
<rect x="344.1" y="202" width="2.8" height="17"/>
<rect x="305" y="218.6" width="42.5" height="3"/>
<path d="M317.5,219 C315,208 320,197 332,194 C324,200 321,209 326,219 Z"/>
<path d="M322,219 C330,216 334,210 333,203 C336,210 333,217 327,221 Z" fill="#f6b040"/>
</g>
<text x="362.3" y="216.3" font-family="Liberation Sans" font-size="25" font-weight="600" fill="#f28a2a" opacity="0.9" textLength="118.2" lengthAdjust="spacingAndGlyphs">智造资料网</text>
<g>
<text x="418.6" y="290" font-family="Liberation Sans" font-size="4.3" font-weight="bold" fill="#b8c4d8">Z</text>
<line x1="420.2" y1="294" x2="420.2" y2="314" stroke="#3a9aa8" stroke-width="0.7"/>
<polygon points="420.2,291.5 419,295 421.4,295" fill="#60b8c0"/>
<rect x="414.3" y="311" width="13.7" height="8.5" fill="none" stroke="#a8b4c8" stroke-width="0.5" stroke-dasharray="1.2,0.8"/>
<line x1="421" y1="314.4" x2="440" y2="314.4" stroke="#3a9a68" stroke-width="0.7"/>
<line x1="440" y1="314.4" x2="447" y2="314.4" stroke="#a03048" stroke-width="0.8"/>
<polygon points="418.4,318.5 422,318.5 420.2,324" fill="#b02040"/>
<text x="418.8" y="328.5" font-family="Liberation Sans" font-size="4" fill="#b0b8c8">X</text>
</g>
<g>
<text x="47.8" y="367" font-family="Liberation Sans" font-size="4.5" fill="#c0c8d8">Z</text>
<line x1="49.6" y1="368" x2="49.6" y2="394" stroke="#30b0c0" stroke-width="0.9"/>
<rect x="48.8" y="369" width="1.8" height="3" fill="#50e0f0"/>
<rect x="51.6" y="383" width="8.6" height="14.8" fill="#70a050" fill-opacity="0.35" stroke="#d8d890" stroke-width="0.6"/>
<line x1="51" y1="390.5" x2="72" y2="390" stroke="#40c050" stroke-width="1"/>
<line x1="72" y1="390" x2="80" y2="389.5" stroke="#5050c0" stroke-width="1"/>
<rect x="48.6" y="394.5" width="3.5" height="4.2" fill="#c02028"/>
<text x="48.6" y="404" font-family="Liberation Sans" font-size="4" fill="#a0a8b8">X</text>
</g>
<g>
<rect x="727" y="329.8" width="64" height="6" rx="2.5" fill="#a4cff0"/>
<rect x="721.4" y="332.4" width="72.2" height="25.6" rx="3.5" fill="#fbfdff" stroke="#b0d6f2" stroke-width="0.8"/>
<text x="725.6" y="343.2" font-family="Liberation Sans" font-size="8.6" fill="#111" stroke="#111" stroke-width="0.3">A</text>
<circle cx="742.6" cy="340" r="3.3" fill="#111"/><circle cx="740.8" cy="338.9" r="2.8" fill="#fbfdff"/>
<path d="M738,347.8 h8 v3 h-2.2 v4 h-3.6 v-4 h-2.2 Z" fill="#111"/>
<circle cx="730" cy="350" r="0.6" fill="#d8a0a0"/><circle cx="733" cy="353" r="0.5" fill="#d0c0a0"/>
<rect x="778" y="333" width="15" height="19" fill="#e4f2fc"/>
<path d="M752,358.5 C751,352 757,349 766,351 C773,346 774,336 766,330.5 C778,329 785,340 787,349 C790,354 793,356 795,358.5 Z" fill="#2a94d8"/>
<ellipse cx="763.6" cy="343" rx="9.8" ry="10.6" fill="#ffffff" stroke="#f4b0c0" stroke-width="0.5"/>
<path d="M756,340 l5,1.5 M755.5,344 l5.5,0 M756,348 l5,-1.5 M764,341 v9 M758,351 q6,3 12,-1" stroke="#f0a8b8" stroke-width="0.45" fill="none"/>
<circle cx="764" cy="338.3" r="1.4" fill="#d82030"/>
<circle cx="768.8" cy="336.8" r="1.2" fill="#fff" stroke="#333" stroke-width="0.35"/><circle cx="769" cy="336.9" r="0.5" fill="#222"/>
<circle cx="788.6" cy="341.6" r="1.5" fill="#d82a2a"/>
<circle cx="768.5" cy="354.5" r="2.5" fill="#fff"/>
<circle cx="793.5" cy="355.5" r="2.8" fill="#fbfdff"/>
<circle cx="763.8" cy="356.6" r="1.3" fill="#e8c030"/>
</g>
</svg>
</body></html>
